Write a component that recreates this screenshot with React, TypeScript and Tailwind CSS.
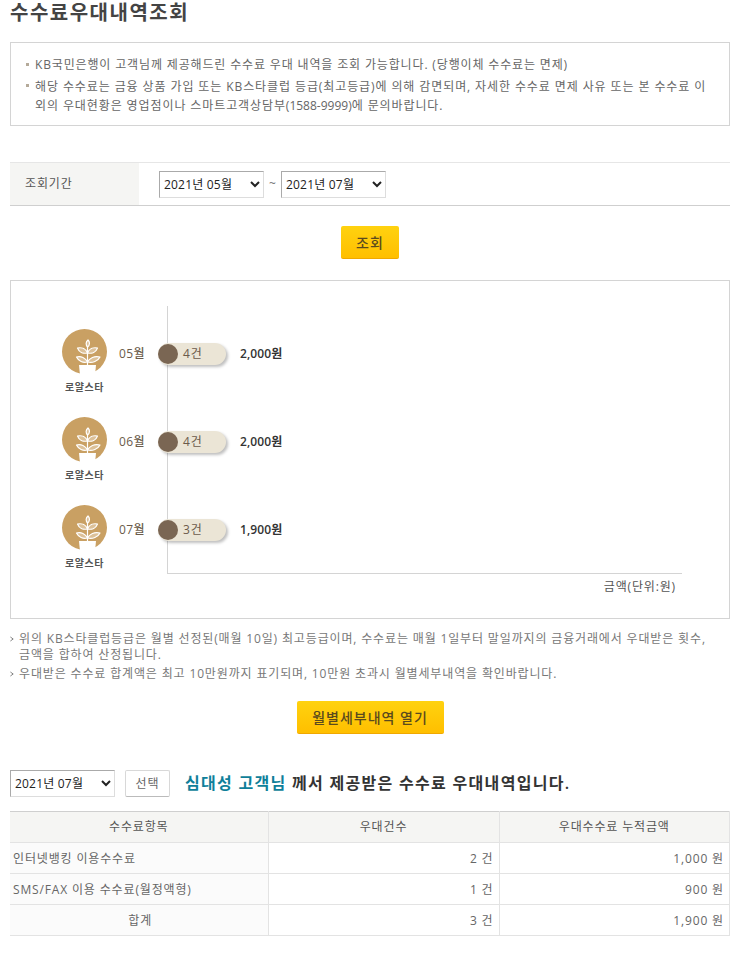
import React from "react";

const FONT = "font-['Open_Sans','Noto_Sans_CJK_KR',sans-serif]";

const months = [
  { month: "05월", count: "4건", amount: "2,000원" },
  { month: "06월", count: "4건", amount: "2,000원" },
  { month: "07월", count: "3건", amount: "1,900원" },
];

const rows = [
  { name: "인터넷뱅킹 이용수수료", count: "2 건", sum: "1,000 원" },
  { name: "SMS/FAX 이용 수수료(월정액형)", count: "1 건", sum: "900 원" },
  { name: "합계", count: "3 건", sum: "1,900 원", center: true },
];

const PlantBadge = () => (
  <svg viewBox="0 0 45 45" className="w-[45px] h-[45px]">
    <circle cx="22.5" cy="22.5" r="22.5" fill="#c9a063" />
    <path d="M17 36 H34 L33 46 H18 Z" fill="#fff" />
    <g fill="#fff" fillOpacity="0.35" stroke="#fff" strokeWidth="1.2" strokeLinecap="round" strokeLinejoin="round">
      <path d="M25.5 36 V18" />
      <path d="M26 11 c-2.4 2 -2.4 5 -0.4 7 c2.4 -2 2.4 -5 0.4 -7 Z" />
      <path d="M25.5 24 c-1.5 -4 -5.5 -6 -10 -5 c1.5 4 5.5 6 10 5 Z" />
      <path d="M25.5 24 c1.5 -4 5.5 -6 10 -5 c-1.5 4 -5.5 6 -10 5 Z" />
      <path d="M25.5 33 c-2 -4 -6.5 -6.5 -11 -5 c2 4 6.5 6.5 11 5 Z" />
      <path d="M25.5 33 c2 -4 7 -6.5 12.5 -5 c-2 4 -7.5 6.5 -12.5 5 Z" />
    </g>
  </svg>
);

const MonthSelect = ({ value }: { value: string }) => (
  <select
    defaultValue={value}
    className={`w-[105px] h-[27px] border border-[#ddd] border-t-[#aaa] border-l-[#aaa] bg-white text-[12px] tracking-[0.2px] text-[#222] ${FONT}`}
  >
    <option>{value}</option>
  </select>
);

const YellowButton = ({ label, width }: { label: string; width: string }) => (
  <button
    className={`${width} h-[33px] rounded-[2px] border-b border-[#f0a800] bg-gradient-to-b from-[#ffd20f] to-[#ffbf00] text-[14px] font-medium tracking-[1px] text-[#5a4a1e] ${FONT}`}
  >
    {label}
  </button>
);

const NoteMark = () => (
  <svg viewBox="0 0 5 6" className="mt-[5px] mr-[5px] h-[6px] w-[4px] shrink-0">
    <path d="M0.5 0.5 L4 3 L0.5 5.5" fill="none" stroke="#666" strokeWidth="1" />
  </svg>
);

export default function App() {
  return (
    <div className={`w-[756px] h-[959px] bg-white px-[10px] overflow-hidden text-[12px] tracking-[0.85px] text-[#666] ${FONT}`}>
      <h1 className="h-[25px] text-[20px] leading-[25px] font-bold tracking-[1.5px] text-[#444]">수수료우대내역조회</h1>

      {/* 안내 박스 */}
      <div className="mt-[17px] h-[84px] w-[720px] border border-[#d4d4d4] pt-[13px] pl-[15px] pr-[20px]">
        <div className="flex leading-[18px]">
          <span className="mt-[7px] mr-[6px] h-[3px] w-[3px] shrink-0 bg-[#b5aa9a]" />
          <p>KB국민은행이 고객님께 제공해드린 수수료 우대 내역을 조회 가능합니다. (당행이체 수수료는 면제)</p>
        </div>
        <div className="mt-[3px] flex leading-[19px]">
          <span className="mt-[7px] mr-[6px] h-[3px] w-[3px] shrink-0 bg-[#b5aa9a]" />
          <p className="tracking-[0.9px]">
            해당 수수료는 금융 상품 가입 또는 KB스타클럽 등급(최고등급)에 의해 감면되며, 자세한 수수료 면제 사유 또는 본 수수료 이외의 우대현황은 영업점이나 스마트고객상담부<span className="inline-block tracking-normal">(1588-9999)</span>에 문의바랍니다.
          </p>
        </div>
      </div>

      {/* 조회기간 */}
      <div className="mt-[36px] flex h-[44px] w-[720px] border-t border-b border-t-[#e6e6e6] border-b-[#cfcfcf]">
        <div className="flex w-[129px] items-center bg-[#f5f5f3] pl-[15px] text-[#555]">조회기간</div>
        <div className="flex items-center pl-[20px]">
          <MonthSelect value="2021년 05월" />
          <span className="mx-[5px] w-[7px] text-[#777]">~</span>
          <MonthSelect value="2021년 07월" />
        </div>
      </div>

      <div className="mt-[20px] flex w-[720px] justify-center">
        <YellowButton label="조회" width="w-[58px]" />
      </div>

      {/* 차트 */}
      <div className="mt-[21px] h-[339px] w-[720px] border border-[#d4d4d4] pt-[25px] pr-[47px]">
        <div className="flex h-[268px]">
          <div className="w-[156px] shrink-0 pt-[23px]">
            {months.map((m) => (
              <div key={m.month} className="flex h-[88px] pl-[51px]">
                <div className="w-[45px] flex flex-col items-center">
                  <PlantBadge />
                  <span className="mt-[6px] whitespace-nowrap text-[10px] font-bold leading-[14px] tracking-[0.5px] text-[#555]">로얄스타</span>
                </div>
                <span className="ml-[12px] mt-[16px] leading-[18px] tracking-[0.4px] text-[#6b5b4b] font-medium">{m.month}</span>
              </div>
            ))}
          </div>
          <div className="flex-1 border-l border-b border-[#d4d4d4] pt-[37px]">
            {months.map((m) => (
              <div key={m.month} className="flex h-[88px] items-start">
                <div className="-ml-[10px] flex h-[22px] w-[68px] items-center rounded-full bg-[#ebe5d6] shadow-[2px_2px_3px_rgba(0,0,0,0.25)]">
                  <span className="h-[20px] w-[20px] rounded-full bg-[#7a6653]" />
                  <span className="ml-[5px] text-[#6b5b4b]">{m.count}</span>
                </div>
                <span className="ml-[14px] leading-[22px] tracking-[0.1px] font-semibold text-[#333]">{m.amount}</span>
              </div>
            ))}
          </div>
        </div>
        <p className="mt-[4px] text-right pr-[6px] leading-[18px] text-[#555]">금액(단위:원)</p>
      </div>

      {/* 유의사항 */}
      <ul className="mt-[12px] w-[720px] text-[#777]">
        <li className="flex leading-[16px]">
          <NoteMark />
          <p>
            위의 KB스타클럽등급은 월별 선정된(매월 10일) 최고등급이며, 수수료는 매월 1일부터 말일까지의 금융거래에서 우대받은 횟수,
            <br />
            금액을 합하여 산정됩니다.
          </p>
        </li>
        <li className="mt-[3px] flex leading-[16px]">
          <NoteMark />
          <p>우대받은 수수료 합계액은 최고 10만원까지 표기되며, 10만원 초과시 월별세부내역을 확인바랍니다.</p>
        </li>
      </ul>

      <div className="mt-[19px] flex w-[720px] justify-center">
        <YellowButton label="월별세부내역 열기" width="w-[147px]" />
      </div>

      {/* 월별 내역 */}
      <div className="mt-[36px] flex h-[27px] items-center">
        <MonthSelect value="2021년 07월" />
        <button className="ml-[10px] h-[27px] w-[45px] rounded-[2px] border border-[#d8d8d8] border-b-[#bbb] bg-white text-[#666]">선택</button>
        <p className="ml-[15px] -mt-[2px] text-[16px] font-semibold tracking-[1.3px] text-[#333]">
          <span className="text-[#0f7f9a]">심대성 고객님</span> 께서 제공받은 수수료 우대내역입니다.
        </p>
      </div>

      <table className="mt-[14px] w-[720px] table-fixed border-collapse border-t border-b border-t-[#cfcfcf] border-b-[#cfcfcf]">
        <thead>
          <tr className="h-[31px] bg-[#f5f5f3] text-[#555]">
            <th className="w-[258px] border-r border-b border-[#e3e3e3] font-normal">수수료항목</th>
            <th className="w-[231px] border-r border-b border-[#e3e3e3] font-normal">우대건수</th>
            <th className="border-b border-r border-[#e3e3e3] font-normal">우대수수료 누적금액</th>
          </tr>
        </thead>
        <tbody>
          {rows.map((r) => (
            <tr key={r.name} className="h-[31px]">
              <td className={`border-r border-b border-[#e3e3e3] bg-[#fbfbfb] pl-[3px] pt-[2px] ${r.center ? "text-center" : ""}`}>{r.name}</td>
              <td className="border-r border-b border-[#e3e3e3] pr-[5px] pt-[2px] text-right">{r.count}</td>
              <td className="border-r border-b border-[#e3e3e3] pr-[5px] pt-[2px] text-right">{r.sum}</td>
            </tr>
          ))}
        </tbody>
      </table>
    </div>
  );
}
